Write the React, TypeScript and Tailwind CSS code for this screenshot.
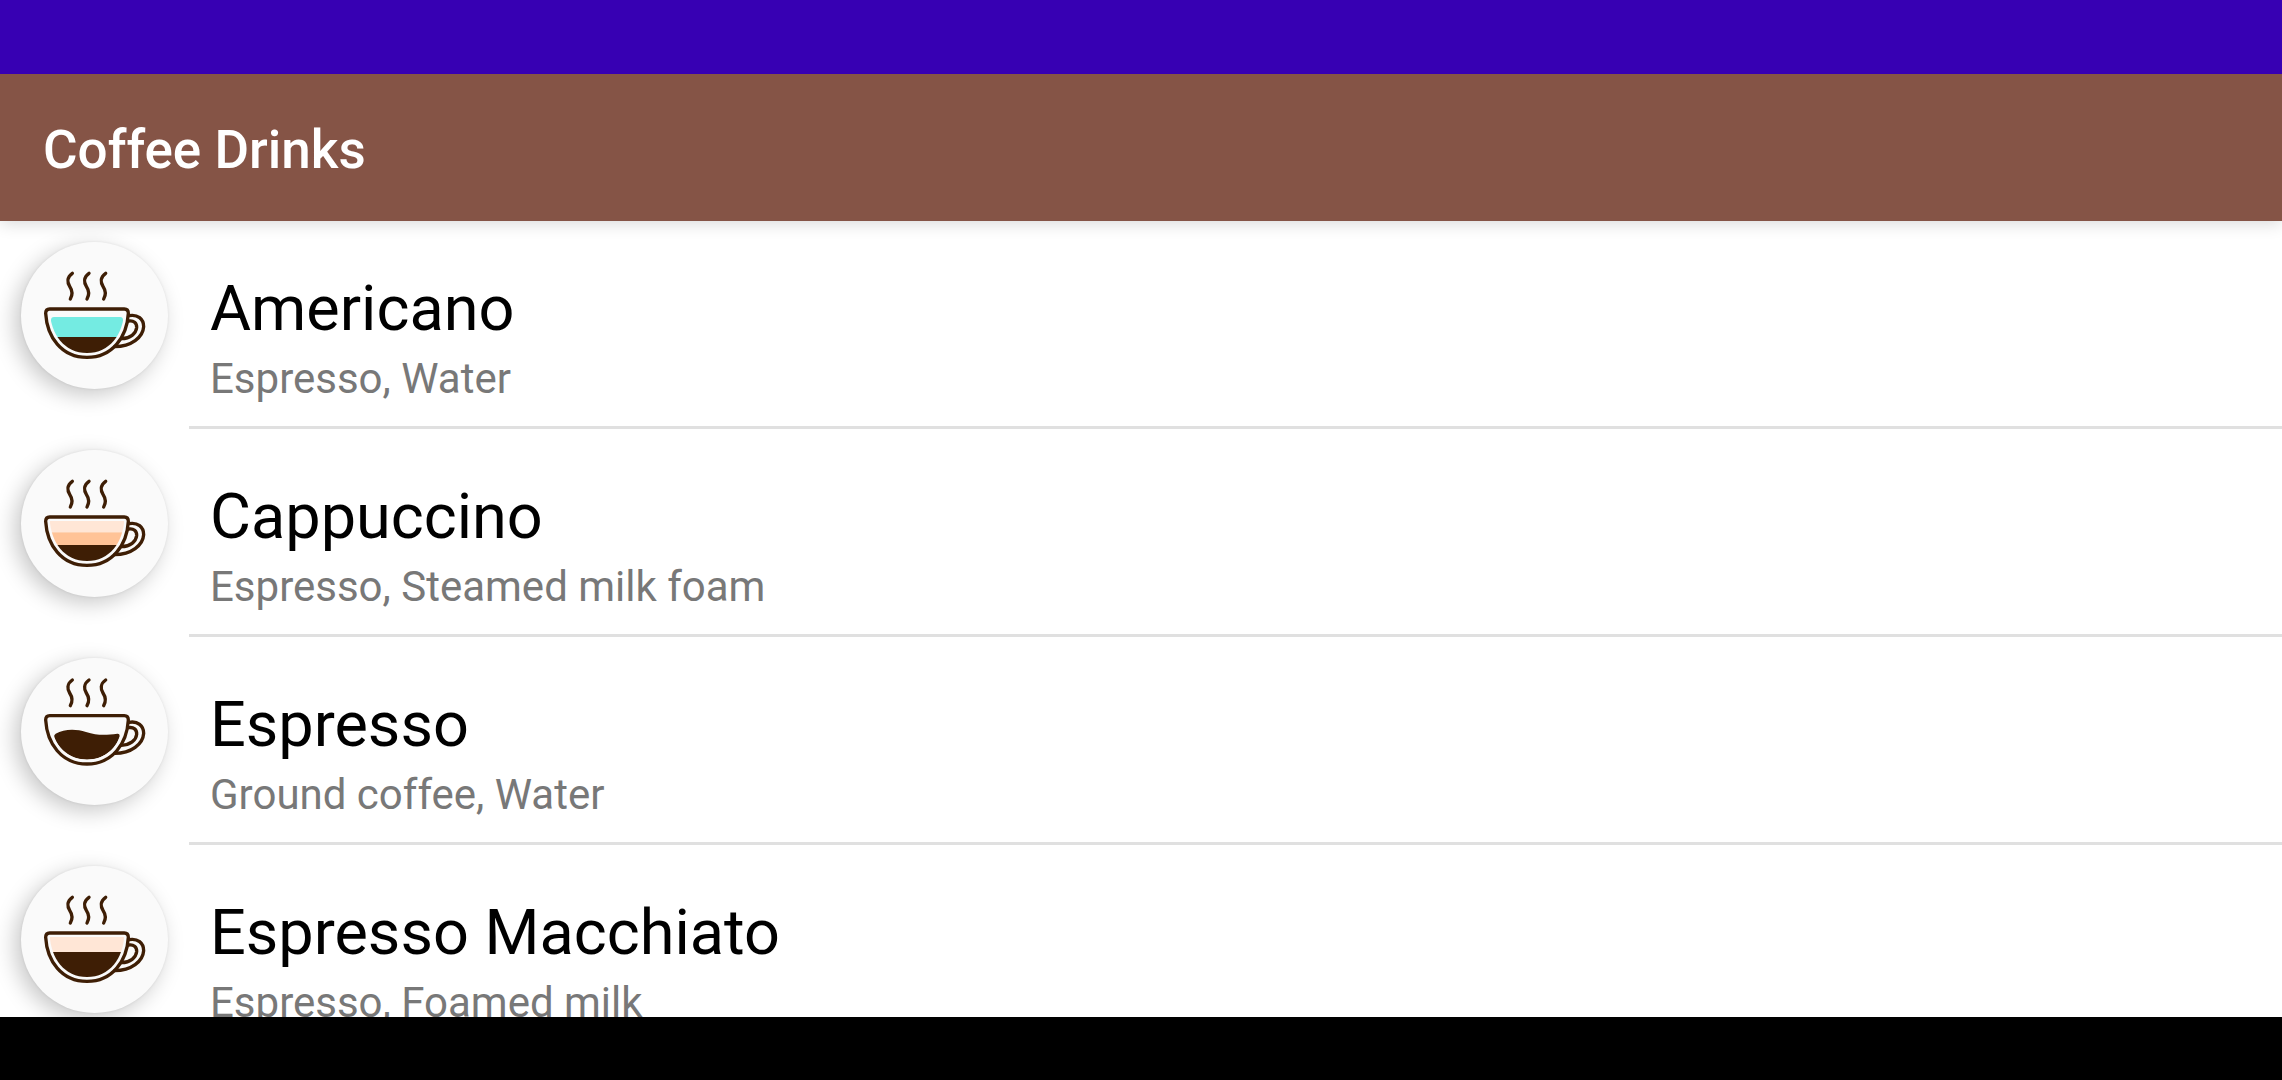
import React, { useId } from "react";

type DrinkKind = "americano" | "cappuccino" | "espresso" | "macchiato";

type Drink = {
  name: string;
  ingredients: string;
  kind: DrinkKind;
};

const drinks: Drink[] = [
  { name: "Americano", ingredients: "Espresso, Water", kind: "americano" },
  { name: "Cappuccino", ingredients: "Espresso, Steamed milk foam", kind: "cappuccino" },
  { name: "Espresso", ingredients: "Ground coffee, Water", kind: "espresso" },
  { name: "Espresso Macchiato", ingredients: "Espresso, Foamed milk", kind: "macchiato" },
];

const BROWN = "#3e1e05";

function Filling({ kind }: { kind: DrinkKind }) {
  if (kind === "americano") {
    return (
      <>
        <rect x="153" y="291" width="216" height="62" rx="9" fill="#74ebe2" />
        <rect x="140" y="351" width="240" height="60" fill={BROWN} />
      </>
    );
  }
  if (kind === "cappuccino") {
    return (
      <>
        <rect x="140" y="279" width="240" height="34" fill="#ffe6d6" />
        <rect x="140" y="313" width="240" height="38" fill="#ffc397" />
        <rect x="140" y="351" width="240" height="60" fill={BROWN} />
      </>
    );
  }
  if (kind === "macchiato") {
    return (
      <>
        <rect x="140" y="279" width="240" height="45" fill="#ffe6d6" />
        <rect x="140" y="324" width="240" height="87" fill={BROWN} />
      </>
    );
  }
  return (
    <path
      d="M163 331Q161 325 167 321C192 307 227 306 258 316C292 327 318 326 352 321Q359 320 359 328C347 370 309 399 261 399C214 399 177 372 163 331Z"
      fill={BROWN}
    />
  );
}

function CupIcon({ kind }: { kind: DrinkKind }) {
  const clip = useId();
  const steam = "M217 160C200 172 202 188 209 199C217 211 219 223 211 237";
  return (
    <svg viewBox="63 66 441 441" className="size-full" aria-hidden="true">
      <defs>
        <clipPath id={clip}>
          <path d="M149 272C152 342 193 399 261 399C329 399 370 342 373 272Z" />
        </clipPath>
      </defs>
      <g transform={kind === "espresso" ? "translate(0 -28)" : undefined}>
        <g clipPath={`url(#${clip})`}>
          <Filling kind={kind} />
        </g>
        <g fill="none" stroke={BROWN} strokeWidth="10" strokeLinecap="round" strokeLinejoin="round">
          <path d={steam} />
          <path d={steam} transform="translate(50 0)" />
          <path d={steam} transform="translate(100 0)" />
          <path d="M149 267H373Q385 267 385 280C381 350 338 412 261 412C184 412 141 350 137 280Q137 267 149 267Z" />
          <path d="M387 287C413 282 431 297 431 320C429 352 394 380 344 380" />
          <path d="M385 303C401 300 411 309 410 323C408 341 391 355 364 356" />
        </g>
      </g>
    </svg>
  );
}

function DrinkRow({ drink }: { drink: Drink }) {
  return (
    <li className="flex shrink-0">
      <div className="p-[21px]">
        <div className="size-[147px] rounded-full bg-[#fafafa] shadow-[-6px_6px_22px_rgba(0,0,0,0.22),0_0_3px_rgba(0,0,0,0.08)]">
          <CupIcon kind={drink.kind} />
        </div>
      </div>
      <div className="flex h-[208px] min-w-0 flex-1 flex-col border-b-[3px] border-[#e0e0e0] pt-[51px] pl-[21px]">
        <h2 className="text-[63px] leading-[74px] text-black">{drink.name}</h2>
        <p className="mt-2 text-[42px] leading-[49px] text-[#787878]">{drink.ingredients}</p>
      </div>
    </li>
  );
}

export default function App() {
  return (
    <div className="flex h-screen flex-col bg-white font-[Roboto,sans-serif]">
      <div className="relative z-20 h-[74px] shrink-0 bg-[#3700b3]" />
      <header className="relative z-10 flex h-[147px] shrink-0 items-center bg-[#855446] px-[43px] pt-1 shadow-[0_2px_16px_rgba(0,0,0,0.16)]">
        <h1 className="text-[53px] leading-[62px] font-medium text-white">Coffee Drinks</h1>
      </header>
      <main className="min-h-0 flex-1 overflow-hidden">
        <ul className="flex flex-col">
          {drinks.map((drink) => (
            <DrinkRow key={drink.name} drink={drink} />
          ))}
        </ul>
      </main>
      <div className="h-[63px] shrink-0 bg-black" />
    </div>
  );
}
